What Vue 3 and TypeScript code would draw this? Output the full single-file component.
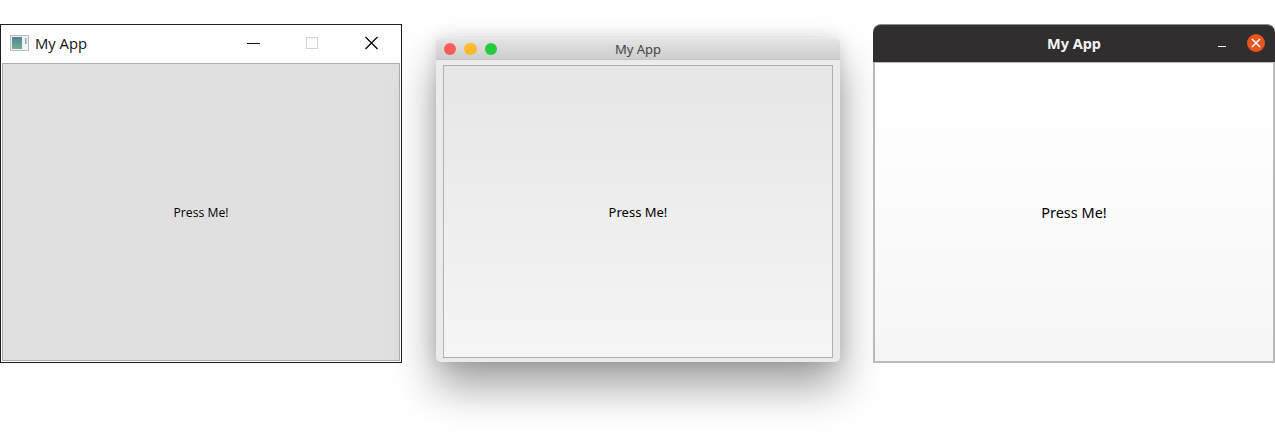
<script setup lang="ts">
const label = 'Press Me!'
const title = 'My App'
</script>

<template>
  <div class="page">
    <section class="win win-windows">
      <header class="win-bar">
        <svg class="app-icon" width="19" height="16" viewBox="0 0 19 16">
          <defs>
            <linearGradient id="icon-fill" x1="0" y1="0" x2="0" y2="1">
              <stop offset="0" stop-color="#55809c" />
              <stop offset="1" stop-color="#74ae8c" />
            </linearGradient>
          </defs>
          <rect x="0.5" y="0.5" width="18" height="15" fill="#f1f3f3" stroke="#b9bcbe" />
          <rect x="2" y="2" width="10" height="12" fill="url(#icon-fill)" />
          <rect x="15" y="3" width="1.5" height="6" fill="#86b5a8" />
        </svg>
        <span class="win-title">{{ title }}</span>
        <div class="win-controls">
          <svg width="13" height="14" viewBox="0 0 13 14"><path d="M0 7.5H13" stroke="#111" fill="none" /></svg>
          <svg width="13" height="14" viewBox="0 0 13 14"><rect x="0.5" y="1.5" width="11" height="11" stroke="#d2d2d2" fill="none" /></svg>
          <svg width="13" height="14" viewBox="0 0 13 14"><path d="M0.5 1L12.5 13M12.5 1L0.5 13" stroke="#000" stroke-width="1.2" fill="none" /></svg>
        </div>
      </header>
      <button class="press press-windows">{{ label }}</button>
    </section>

    <section class="win win-mac">
      <header class="mac-bar">
        <div class="lights">
          <span class="light red"></span>
          <span class="light yellow"></span>
          <span class="light green"></span>
        </div>
        <span class="mac-title">{{ title }}</span>
      </header>
      <div class="mac-body">
        <button class="press press-mac">{{ label }}</button>
      </div>
    </section>

    <section class="win win-ubuntu">
      <header class="ubuntu-bar">
        <span class="ubuntu-title">{{ title }}</span>
        <svg class="ubuntu-min" width="8" height="2" viewBox="0 0 8 2"><rect width="8" height="1" fill="#f2f2f2" /></svg>
        <span class="ubuntu-close">
          <svg width="10" height="10" viewBox="0 0 10 10"><path d="M1 1L9 9M9 1L1 9" stroke="#fff" stroke-width="1.5" fill="none" /></svg>
        </span>
      </header>
      <button class="press press-ubuntu">{{ label }}</button>
    </section>
  </div>
</template>

<style>
html, body {
  background: #fff;
  overflow: hidden;
}
</style>

<style scoped>
.page {
  display: flex;
  align-items: flex-start;
  width: 1275px;
  height: 437px;
  padding-top: 24px;
  box-sizing: border-box;
}
.win {
  display: flex;
  flex-direction: column;
  box-sizing: border-box;
}
.press {
  flex: 1;
  display: block;
  margin: 0;
  padding: 0;
  color: #000;
  cursor: default;
  box-sizing: border-box;
}

.win-windows {
  width: 402px;
  height: 339px;
  border: 1px solid #1f1f1f;
  background: #fff;
}
.win-bar {
  display: flex;
  align-items: center;
  height: 38px;
  padding: 0 0 2px 9px;
  box-sizing: border-box;
  flex-shrink: 0;
}
.app-icon {
  margin-right: 6px;
}
.win-title {
  font: 14.8px "Open Sans", sans-serif;
  color: #111;
}
.win-controls {
  display: flex;
  gap: 46px;
  margin-left: auto;
  margin-right: 23px;
}
.press-windows {
  margin: 0 1px 1px;
  background: #e0e0e0;
  border: 1px solid #adadad;
  font: 12.2px "Open Sans", sans-serif;
}

.win-mac {
  width: 404px;
  height: 324px;
  margin: 14px 0 0 34px;
  border-radius: 5px;
  background: #ebebeb;
  box-shadow: 0 24px 44px rgba(0, 0, 0, 0.38), 0 0 16px rgba(0, 0, 0, 0.12);
}
.mac-bar {
  position: relative;
  display: flex;
  align-items: center;
  justify-content: center;
  height: 22px;
  flex-shrink: 0;
  border-radius: 5px 5px 0 0;
  border-top: 1px solid #ebebeb;
  border-bottom: 1px solid #c4c4c4;
  box-sizing: border-box;
  background: linear-gradient(#e4e4e4, #cdcdcd);
}
.lights {
  position: absolute;
  left: 8px;
  top: 4px;
  display: flex;
  gap: 8px;
}
.light {
  width: 12.4px;
  height: 12.4px;
  border-radius: 50%;
}
.red { background: #fc5b57; }
.yellow { background: #ffbb2e; }
.green { background: #27c93f; }
.mac-title {
  font: 13px "Noto Sans", sans-serif;
  color: #444;
}
.mac-body {
  flex: 1;
  display: flex;
  padding: 5px 7px 4px;
}
.press-mac {
  border: 1px solid #b0b0b0;
  background: linear-gradient(#e6e6e6, #f5f5f5);
  font: 13px "Noto Sans", sans-serif;
}

.win-ubuntu {
  width: 402px;
  height: 339px;
  margin-left: 33px;
}
.ubuntu-bar {
  position: relative;
  display: flex;
  align-items: center;
  justify-content: center;
  height: 38px;
  padding-bottom: 2px;
  flex-shrink: 0;
  border-radius: 8px 8px 0 0;
  border-top: 1px solid #8f8f8f;
  box-sizing: border-box;
  background: #302e2e;
}
.ubuntu-title {
  font: bold 14.5px "Noto Sans", sans-serif;
  color: #f4f4f4;
}
.ubuntu-min {
  position: absolute;
  right: 49px;
  top: 21px;
}
.ubuntu-close {
  position: absolute;
  right: 10px;
  top: 9px;
  display: flex;
  align-items: center;
  justify-content: center;
  width: 18px;
  height: 18px;
  border-radius: 50%;
  background: #e95420;
}
.press-ubuntu {
  border: 2px solid #bababa;
  border-top-width: 1px;
  background: linear-gradient(#fff 12%, #f6f6f6);
  font: 14.5px "Noto Sans", sans-serif;
}
</style>
